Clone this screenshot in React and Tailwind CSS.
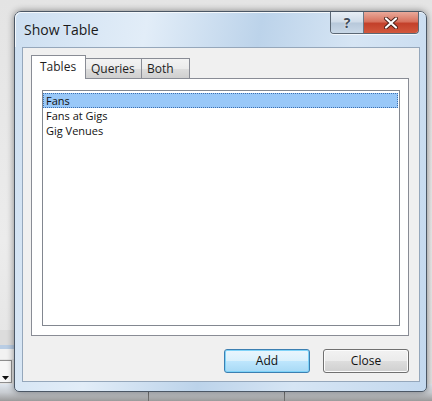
const font = { fontFamily: '"Open Sans", "Noto Sans", "Liberation Sans", sans-serif' };

function CaptionButtons() {
  return (
    <div className="flex h-[22px] rounded-b-[4px] border border-t-0 border-[#5b6774] overflow-hidden shadow-[0_1px_0_rgba(255,255,255,0.7)]">
      <div className="w-[33px] h-full flex items-center justify-center border-r border-[#6b7785] bg-[linear-gradient(180deg,#e8eef5_0%,#cfdbe8_48%,#b7c8da_52%,#c9d8e7_100%)]">
        <span className="text-[14px] font-bold leading-none text-[#3f4a57] [text-shadow:0_0_2px_#fff]" style={font}>?</span>
      </div>
      <div className="w-[54px] h-full flex items-center justify-center bg-[linear-gradient(180deg,#e9a99a_0%,#d8735f_45%,#c3402a_55%,#d2583d_100%)]">
        <svg width="14" height="12" viewBox="0 0 14 12">
          <path d="M2 1.5 L12 10.5 M12 1.5 L2 10.5" stroke="#4a2018" strokeWidth="4" strokeLinecap="round" />
          <path d="M2 1.5 L12 10.5 M12 1.5 L2 10.5" stroke="#ffffff" strokeWidth="2.2" strokeLinecap="round" />
        </svg>
      </div>
    </div>
  );
}

function Tab({ label, active, width }) {
  if (active) {
    return (
      <div className="relative z-10 w-[55px] h-[24px] -mb-px border border-b-0 border-[#898c95] bg-white pl-[8px] pt-[2px] text-[12px] text-[#1e1e1e]">
        {label}
      </div>
    );
  }
  return (
    <div className={`${width} h-[20px] -ml-px border border-b-0 border-[#898c95] bg-[linear-gradient(180deg,#f3f3f3_0%,#ebebeb_50%,#dddddd_51%,#cfcfcf_100%)] pl-[5px] text-[12px] leading-[19px] text-[#1e1e1e]`}>
      {label}
    </div>
  );
}

export default function App() {
  const rows = ['Fans', 'Fans at Gigs', 'Gig Venues'];

  return (
    <div className="relative w-[432px] h-[401px] overflow-hidden bg-[linear-gradient(180deg,#e4e4e4_0%,#ececec_60%,#e2e2e2_100%)]" style={font}>
      {/* access window behind the dialog */}
      <div className="absolute left-0 top-[330px] w-[20px] h-[16px] bg-[#dcdcdc]" />
      <div className="absolute left-0 top-[345px] w-[20px] h-[4px] bg-[#b9cde4]" />
      <div className="absolute left-0 top-[349px] w-[20px] h-[10px] bg-[#f2f2f2]" />
      <div className="absolute left-0 top-[360px] w-[12px] h-[23px] border border-l-0 border-[#8e8e8e] bg-[#f7f7f7] flex items-end justify-center pb-[2px]">
        <svg width="7" height="4" viewBox="0 0 7 4"><path d="M0 0 H7 L3.5 4 Z" fill="#111" /></svg>
      </div>
      <div className="absolute left-0 top-[384px] w-[432px] h-[17px] bg-[linear-gradient(180deg,#dfe6ee_0%,#c8ccd1_50%,#9a9a9a_100%)]" />
      <div className="absolute left-[148px] top-[392px] w-px h-[9px] bg-[#6f6f6f]" />
      <div className="absolute left-[284px] top-[392px] w-px h-[9px] bg-[#6f6f6f]" />

      {/* dialog window */}
      <div className="absolute left-[14px] top-[11px] w-[413px] h-[381px] rounded-t-[7px] rounded-b-[5px] border border-[#4b5765] shadow-[0_0_7px_rgba(0,0,0,0.45)] bg-[linear-gradient(100deg,#cddff1_0%,#e2edf8_28%,#bcd3ea_52%,#d6e5f4_72%,#c3d8ee_100%)] flex flex-col">
        <div className="h-[35px] flex items-start justify-between rounded-t-[6px] border-t border-l border-[#f4f8fc]">
          <div className="pl-[8px] pt-[7px] text-[14px] leading-[19px] text-[#1a1a1a]">Show Table</div>
          <div className="mr-[7px] -mt-px">
            <CaptionButtons />
          </div>
        </div>

        <div className="ml-[7px] w-[398px] h-[335px] border border-[#95a7bb] bg-[#f0f0f0] flex flex-col pl-[8px] pr-[10px] pt-[7px]">
          <div className="flex items-end">
            <Tab label="Tables" active />
            <Tab label="Queries" width="w-[57px]" />
            <Tab label="Both" width="w-[49px]" />
          </div>

          <div className="w-[378px] h-[258px] border border-[#898c95] bg-white pl-[10px] pt-[11px]">
            <div className="w-[358px] h-[236px] border border-[#828790] bg-white pt-[2px] text-[11px] text-[#111]">
              {rows.map((r, i) => (
                <div
                  key={r}
                  className={
                    i === 0
                      ? 'h-[15px] mr-px leading-[13px] pl-[2px] bg-[#99c8f8] border border-dotted border-[#3c6fb0]'
                      : 'h-[15px] leading-[15px] pl-[3px]'
                  }
                >
                  {r}
                </div>
              ))}
            </div>
          </div>

          <div className="mt-[13px] flex justify-end gap-[13px]">
            <button className="w-[86px] h-[24px] rounded-[3px] border border-[#3c7fb1] shadow-[inset_0_0_0_1px_#7fd3f8] bg-[linear-gradient(180deg,#eaf6fd_0%,#d9f0fc_50%,#bee6fd_51%,#a7d9f5_100%)] text-[12px] text-[#111]">
              Add
            </button>
            <button className="w-[86px] h-[24px] rounded-[3px] border border-[#707070] shadow-[inset_0_0_0_1px_#fcfcfc] bg-[linear-gradient(180deg,#f2f2f2_0%,#ebebeb_50%,#dddddd_51%,#cfcfcf_100%)] text-[12px] text-[#111]">
              Close
            </button>
          </div>
        </div>
      </div>
    </div>
  );
}
